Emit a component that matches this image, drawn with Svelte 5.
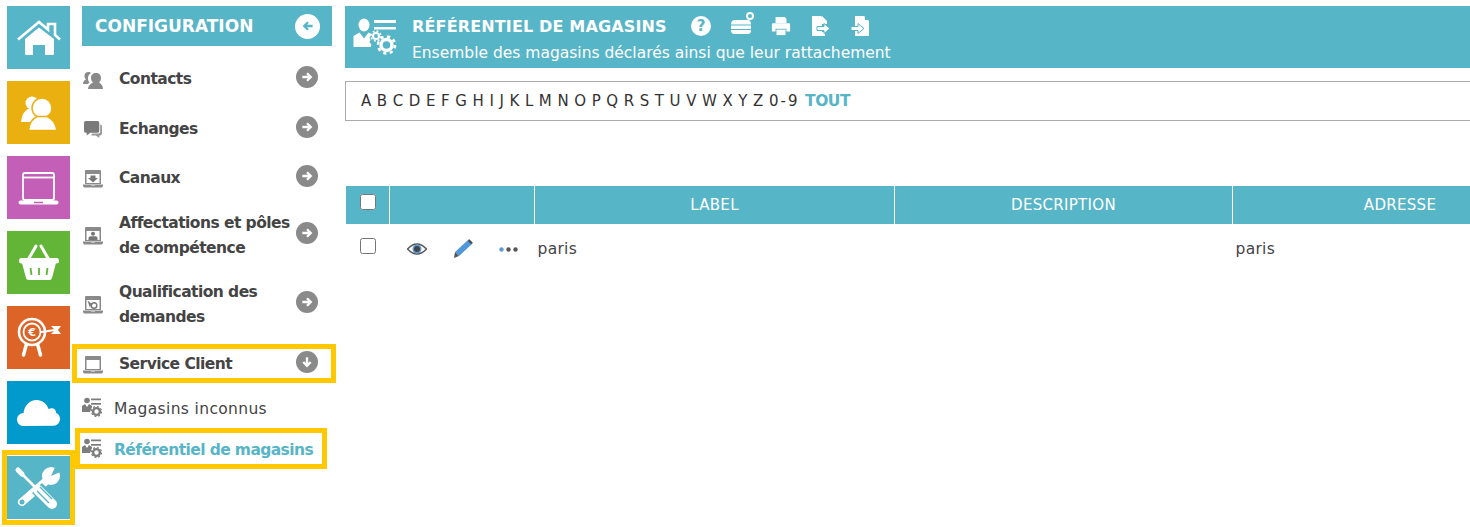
<script lang="ts">
  const letters = 'ABCDEFGHIJKLMNOPQRSTUVWXYZ'.split('');

  const menu = [
    { label: ['Contacts'], icon: 'contacts', h: 50 },
    { label: ['Echanges'], icon: 'chat', h: 50 },
    { label: ['Canaux'], icon: 'canaux', h: 48 },
    { label: ['Affectations et pôles', 'de compétence'], icon: 'affect', h: 66 },
    { label: ['Qualification des', 'demandes'], icon: 'qualif', h: 72 },
  ];
</script>

{#snippet laptop(inner)}
  <svg class="item-icon" viewBox="0 0 20 18" fill="#8a8a8a">
    <path d="M2 1q0-1 1-1h14q1 0 1 1v13H2zM3.500 4v9h13V4z" fill-rule="evenodd" />
    <path d="M0 14.500h20v1.500l-1 1.500H1l-1-1.500z" />
    <path d="M8 15h4v.8H8z" fill="#ccc" />
    {#if inner === 'canaux'}
      <path d="M7.500 5.500h5V8h2.500l-5 4.500L5 8h2.500z" fill="#777" />
    {:else if inner === 'affect'}
      <circle cx="10" cy="6.800" r="2" fill="#777" />
      <path d="M5.500 13v-2q0-1.800 2-1.800h5q2 0 2 1.800v2z" fill="#777" />
    {:else if inner === 'qualif'}
      <circle cx="11" cy="9.500" r="2.800" fill="none" stroke="#777" stroke-width="1.400" />
      <path d="M4.500 4.500 10 9l-2.500.5L7 12z" fill="#777" />
    {/if}
  </svg>
{/snippet}

{#snippet storeIcon()}
  <svg class="store-icon" viewBox="0 0 20 20" fill="#7d7d7d">
    <circle cx="5" cy="3.500" r="2.800" />
    <path d="M0 15V9l3-2 2 3 2-3 3 2v1l-2 5z" />
    <path d="M9 1.500h10v1.800H9zM9 6h10v1.800H9z" />
    <circle cx="14.500" cy="14.500" r="3.400" fill="none" stroke="#7d7d7d" stroke-width="2.400" />
    <circle cx="14.500" cy="14.500" r="5" fill="none" stroke="#7d7d7d" stroke-width="1.200" stroke-dasharray="2 1.900" />
  </svg>
{/snippet}

{#snippet arrow(dir)}
  <span class="round">
    <svg viewBox="0 0 12 12" class={dir}>
      <path d="M2 6h7M6 2.800 9.200 6 6 9.200" fill="none" stroke="#fff" stroke-width="2" />
    </svg>
  </span>
{/snippet}

<div class="page">
  <nav class="tiles">
    <div class="tile teal">
      <svg viewBox="0 0 63 63" fill="#fff">
        <path d="M11 33.500 32 16l9 7.500V18h7v11l5 4.500" fill="none" stroke="#fff" stroke-width="2.600" />
        <path d="M18 33 32 21.500 47 33v14.500q0 1.500-1.500 1.500H38V39H26v10h-6.500q-1.500 0-1.500-1.500z" />
      </svg>
    </div>
    <div class="tile yellow">
      <svg viewBox="0 0 63 63" fill="#fff">
        <circle cx="25" cy="22" r="6.500" />
        <path d="M14 41q1-10 7-13h8l4 5-8 8z" />
        <circle cx="35" cy="27" r="10" stroke="#e9b00f" stroke-width="1.500" />
        <path d="M21.500 49.500q1-11 9-14h9.500q8 3 10 14z" stroke="#e9b00f" stroke-width="1.500" />
      </svg>
    </div>
    <div class="tile purple">
      <svg viewBox="0 0 63 63" fill="none" stroke="#fff">
        <rect x="16" y="17" width="31" height="27" rx="2" stroke-width="1.800" />
        <path d="M16 21.500h31" stroke-width="1.800" />
        <path d="M13.500 46.500h36" stroke-width="4" stroke-linecap="round" />
        <path d="M27 46.500h9" stroke="#c45fb8" stroke-width="1.500" />
      </svg>
    </div>
    <div class="tile green">
      <svg viewBox="0 0 63 63" fill="#fff">
        <path d="M21 29 29 15M42 29 34 15" stroke="#fff" stroke-width="3" stroke-linecap="round" />
        <rect x="12" y="27" width="40" height="5.500" rx="2.500" />
        <path d="M15 32h34l-4 15q-.5 2-2.500 2h-21q-2 0-2.500-2z" />
        <path d="M23.500 37l1 7M32 37v7M40.500 37l-1 7" stroke="#62b536" stroke-width="1.800" fill="none" />
      </svg>
    </div>
    <div class="tile orange">
      <svg viewBox="0 0 63 63" fill="none" stroke="#fff">
        <path d="M20 36 16.500 49M30 36l3.500 13" stroke-width="3.500" stroke-linecap="round" />
        <circle cx="25" cy="26" r="13" fill="#dd6427" stroke-width="2.600" />
        <circle cx="25" cy="26" r="8.500" stroke-width="1.800" />
        <text x="25" y="30" text-anchor="middle" fill="#fff" stroke="none" font-size="11" font-weight="700" font-family="DejaVu Sans">€</text>
        <path d="M34 26 48 24" stroke-width="2" />
        <path d="M44 20l4 4-4 4h10l-3-4 3-4z" fill="#fff" stroke="none" />
      </svg>
    </div>
    <div class="tile blue">
      <svg viewBox="0 0 63 63" fill="#fff">
        <path d="M16 45c-3.500 0-6-3-6-6.500s3-6.500 6.500-6.500c.7-7 6-13 13-13 6 0 10.500 4 12 9 1-.5 2-.7 3-.7 3 0 4.500 2 4.500 4.500 2 1 4 3 4 6 0 4-3 7-6 7z" />
      </svg>
    </div>
    <div class="tile teal">
      <svg viewBox="0 0 63 63" fill="none">
        <path d="M15 46 38 26" stroke="#fff" stroke-width="8" stroke-linecap="round" />
        <circle cx="44" cy="20" r="9" fill="#fff" />
        <path d="M44 20 50 7 58 14z" fill="#57b5c8" />
        <circle cx="15" cy="46" r="2.500" fill="#57b5c8" />
        <path d="M30 32l16 16" stroke="#57b5c8" stroke-width="14" />
        <path d="M11 14l4 4" stroke="#fff" stroke-width="5" stroke-linecap="round" />
        <path d="M14 17l15 15" stroke="#fff" stroke-width="2.600" />
        <path d="M31 34l14 14" stroke="#fff" stroke-width="10" stroke-linecap="round" />
        <path d="M33 31l12 12M30 35l12 12" stroke="#57b5c8" stroke-width="1.400" />
      </svg>
    </div>
  </nav>

  <aside class="side">
    <div class="side-head">
      <span>CONFIGURATION</span>
      <span class="round white">
        <svg viewBox="0 0 12 12"><path d="M10 6H3M6 2.800 2.800 6 6 9.200" fill="none" stroke="#57b5c8" stroke-width="2" /></svg>
      </span>
    </div>

    {#each menu as m}
      <div class="item" style="height: {m.h}px">
        {#if m.icon === 'contacts'}
          <svg class="item-icon" viewBox="0 0 20 18" fill="#8a8a8a">
            <path d="M0 13c0-2 1-3.500 3-4.500-1-1-1.500-2-1.500-3.500 0-2.500 1.500-4 4-4 1 0 2 .5 2.500 1-2 1-3 3-3 5 0 2 .5 3.500 1.500 4.500C5 12.500 5 13 4.500 13z" />
            <path d="M5 18c0-3 2-5 5-6.500-1-1-2-2.500-2-4.500 0-3 2-5 5-5s5 2 5 5c0 2-1 3.500-2 4.500 2 1 4 3.500 4 6.500z" />
          </svg>
        {:else if m.icon === 'chat'}
          <svg class="item-icon" viewBox="0 0 20 20" fill="#7a7a7a">
            <path d="M2 0h13q2 0 2 2v9q0 2-2 2H7l-4 3v-3H2q-2 0-2-2V2q0-2 2-2z" />
            <path d="M18 4q2 0 2 2v8q0 2-2 2h-1v3l-4-3H8l1-2h7q2 0 2-2z" fill="#9a9a9a" />
          </svg>
        {:else}
          {@render laptop(m.icon)}
        {/if}
        <span class="item-label">
          {#each m.label as line}
            <span>{line}</span>
          {/each}
        </span>
        {@render arrow('right')}
      </div>
    {/each}

    <div class="item service">
      {@render laptop('')}
      <span class="item-label">Service Client</span>
      {@render arrow('down')}
    </div>
    <div class="sub">
      {@render storeIcon()}
      <span>Magasins inconnus</span>
    </div>
    <div class="sub current">
      {@render storeIcon()}
      <span>Référentiel de magasins</span>
    </div>

    <div class="mark mark-service"></div>
    <div class="mark mark-current"></div>
  </aside>

  <main class="main">
    <header class="head">
      <svg class="head-icon" viewBox="0 0 60 60" fill="#fff">
        <ellipse cx="19" cy="17" rx="5.500" ry="6.500" />
        <path d="M8.500 39V28l6-3.500 4.500 6 4.500-6 3 1.500-2 4 1 2-1 2 2 3-1 2z" />
        <path d="M29 12h22v3H29zM29 19h22v2.500H29z" />
        <circle cx="31" cy="28" r="3" fill="none" stroke="#fff" stroke-width="2" />
        <circle cx="31" cy="28" r="5" fill="none" stroke="#fff" stroke-width="1.500" stroke-dasharray="2 1.900" />
        <circle cx="41.500" cy="37" r="5.500" fill="none" stroke="#fff" stroke-width="3.400" />
        <circle cx="41.500" cy="37" r="8.500" fill="none" stroke="#fff" stroke-width="2.600" stroke-dasharray="3.300 3.400" />
      </svg>
      <div class="head-text">
        <div class="head-row">
          <h1>RÉFÉRENTIEL DE MAGASINS</h1>
          <div class="head-tools">
            <span class="help">?</span>
            <svg class="stack" viewBox="0 0 23 22" fill="#fff">
              <path d="M4 8h13q3 0 3 4.500H0Q0 8 4 8z" />
              <path d="M0 13.500h20v3.500H0z" />
              <path d="M0 18h20q0 4-3 4H3q-3 0-3-4z" />
              <circle cx="19" cy="4" r="3" fill="none" stroke="#fff" stroke-width="2" />
            </svg>
            <svg viewBox="0 0 22 20" fill="#fff">
              <path d="M5 0h10l2 2v5H5z" />
              <path d="M1 8q0-1 1-1h18q1 0 1 1v8h-4v-3H5v3H1z" />
              <path d="M6 14h10v6H6z" />
            </svg>
            <svg viewBox="0 0 20 20" fill="#fff">
              <path d="M1 0h9l1 1v4h5v3H11v8h3v4H1z" />
              <path d="M11 0l5 5h-5z" />
              <path d="M6 10.500h7V7.500l6 5-6 5v-3H6z" stroke="#57b5c8" stroke-width="1" />
            </svg>
            <svg viewBox="0 0 20 20" fill="#fff">
              <path d="M4 0h9l5 5v15H4z" />
              <path d="M14 0l4 4h-4z" fill="#57b5c8" />
              <path d="M0 10.500h7V7.500l6 5-6 5v-3H0z" stroke="#57b5c8" stroke-width="1" />
            </svg>
          </div>
        </div>
        <p>Ensemble des magasins déclarés ainsi que leur rattachement</p>
      </div>
    </header>

    <div class="alpha">
      {#each letters as l}
        <span>{l}</span>
      {/each}
      <span class="digits">0-9</span>
      <span class="all">TOUT</span>
    </div>

    <table>
      <thead>
        <tr>
          <th class="c-check"><input type="checkbox" /></th>
          <th class="c-actions"></th>
          <th class="c-label">LABEL</th>
          <th class="c-desc">DESCRIPTION</th>
          <th class="c-addr">ADRESSE</th>
        </tr>
      </thead>
      <tbody>
        <tr>
          <td class="td-check"><input type="checkbox" /></td>
          <td>
            <div class="actions">
              <svg viewBox="0 0 20 14" width="20" fill="none">
                <path d="M.5 7Q10-3 19.500 7 10 17 .5 7z" stroke="#555" stroke-width="1.400" />
                <circle cx="10" cy="7" r="4.500" fill="#5b9bd5" />
                <circle cx="10" cy="7" r="3" fill="#444" />
              </svg>
              <svg viewBox="0 0 20 20" width="20">
                <path d="M15 1l4 4L6 17l-4-4z" fill="#4f97d6" />
                <path d="M2 13l4 4-5 2z" fill="#555" />
                <path d="M16 0l4 4-2 1-3-3z" fill="#444" />
              </svg>
              <svg viewBox="0 0 19 5" width="19">
                <circle cx="2.500" cy="2.500" r="2.200" fill="#5b9bd5" />
                <circle cx="9.500" cy="2.500" r="2.200" fill="#555" />
                <circle cx="16.500" cy="2.500" r="2.200" fill="#555" />
              </svg>
            </div>
          </td>
          <td>paris</td>
          <td></td>
          <td>paris</td>
        </tr>
      </tbody>
    </table>
  </main>

  <div class="mark mark-tools"></div>
</div>

<style>
  :global(body) {
    margin: 0;
    background: #fff;
  }

  .page {
    position: relative;
    display: flex;
    width: 1470px;
    height: 527px;
    overflow: hidden;
    box-sizing: border-box;
    padding: 6px 0 0 7px;
    font-family: "DejaVu Sans", sans-serif;
    color: #444;
  }

  .tiles {
    display: flex;
    flex-direction: column;
    gap: 12px;
    width: 63px;
    flex: none;
  }

  .tile {
    width: 63px;
    height: 63px;
  }

  .tile svg {
    display: block;
    width: 63px;
    height: 63px;
  }

  .teal { background: #57b5c8; }
  .yellow { background: #e9b00f; }
  .purple { background: #c45fb8; }
  .green { background: #62b536; }
  .orange { background: #dd6427; }
  .blue { background: #0299cc; }

  .side {
    position: relative;
    width: 250px;
    flex: none;
    margin-left: 12px;
  }

  .side-head {
    height: 40px;
    margin-bottom: 6px;
    background: #57b5c8;
    color: #fff;
    display: flex;
    align-items: center;
    justify-content: space-between;
    padding: 0 12px 0 13px;
    font-size: 17px;
    font-weight: 700;
  }

  .round {
    width: 22px;
    height: 22px;
    flex: none;
    border-radius: 50%;
    background: #8a8a8a;
    display: flex;
    align-items: center;
    justify-content: center;
  }

  .round svg {
    width: 14px;
    height: 14px;
  }

  .round.white {
    width: 25px;
    height: 25px;
    background: #fff;
  }

  .down {
    transform: rotate(90deg);
  }

  .item {
    display: flex;
    align-items: center;
    padding-right: 14px;
    font-size: 15.500px;
    font-weight: 700;
    letter-spacing: -0.55px;
    box-sizing: border-box;
  }

  .item-icon {
    width: 20px;
    height: 18px;
    flex: none;
    margin: 5px 0 0 1px;
  }

  .item-label {
    flex: 1;
    display: flex;
    flex-direction: column;
    margin-left: 16px;
    padding-top: 5px;
    line-height: 25px;
    white-space: nowrap;
  }

  .service {
    height: 48px;
  }

  .sub {
    display: flex;
    align-items: center;
    height: 41px;
    font-size: 15.500px;
    letter-spacing: 0.35px;
  }

  .sub span {
    padding-top: 4px;
  }

  .store-icon {
    width: 20px;
    height: 20px;
    flex: none;
    margin-right: 12px;
  }

  .sub.current {
    color: #57b5c8;
    font-weight: 700;
    letter-spacing: -0.6px;
  }

  .mark {
    position: absolute;
    border: 5px solid #ffc800;
    box-sizing: border-box;
    pointer-events: none;
  }

  .mark-service {
    left: -10px;
    top: 338px;
    width: 264px;
    height: 39px;
  }

  .mark-current {
    left: -7px;
    top: 422px;
    width: 252px;
    height: 41px;
  }

  .mark-tools {
    left: 2px;
    top: 450px;
    width: 73px;
    height: 75px;
  }

  .main {
    flex: none;
    width: 1125px;
    margin-left: 13px;
  }

  .head {
    height: 62px;
    background: #57b5c8;
    color: #fff;
    display: flex;
    align-items: flex-start;
  }

  .head-icon {
    width: 60px;
    height: 60px;
    margin-top: 2px;
    flex: none;
  }

  .head-text {
    margin-left: 7px;
    padding-top: 10px;
  }

  .head-row {
    display: flex;
    align-items: center;
  }

  h1 {
    margin: 0;
    font-size: 16px;
    font-weight: 700;
    letter-spacing: 0.15px;
    width: 268px;
    white-space: nowrap;
  }

  .head-tools {
    display: flex;
    align-items: center;
    gap: 20px;
    margin-left: 11px;
  }

  .head-tools svg {
    width: 20px;
    height: 20px;
  }

  .head-tools .stack {
    width: 23px;
    height: 22px;
    margin: -6px -3px 0 0;
  }

  .help {
    width: 20px;
    height: 20px;
    border-radius: 50%;
    background: #fff;
    color: #57b5c8;
    font-size: 15px;
    font-weight: 700;
    display: flex;
    align-items: center;
    justify-content: center;
  }

  .head-text p {
    margin: 8px 0 0;
    font-size: 15.500px;
    white-space: nowrap;
  }

  .alpha {
    margin-top: 13px;
    height: 40px;
    box-sizing: border-box;
    border: 1px solid #aaa;
    border-right: none;
    display: flex;
    align-items: center;
    gap: 5.600px;
    padding-left: 15px;
    font-size: 15px;
    color: #333;
  }

  .digits {
    letter-spacing: 2px;
  }

  .all {
    color: #57b5c8;
    font-weight: 700;
    font-size: 15.500px;
    letter-spacing: -0.5px;
  }

  table {
    margin: 65px 0 0 1px;
    border-collapse: collapse;
    table-layout: fixed;
    width: 1217px;
  }

  th {
    height: 38px;
    padding: 0;
    background: #57b5c8;
    color: #fff;
    font-size: 15px;
    font-weight: 400;
    letter-spacing: 0.3px;
    text-align: center;
    border-left: 1px solid #fff;
  }

  th:first-child {
    border-left: none;
  }

  .c-check { width: 43px; }
  .c-actions { width: 144px; }
  .c-label { width: 359px; }
  .c-desc { width: 337px; }
  .c-addr { width: 334px; }

  td {
    height: 48px;
    padding: 1px 3px 0;
    font-size: 15.500px;
    letter-spacing: 0.3px;
    color: #444;
  }

  td:first-child,
  th:first-child {
    text-align: center;
  }

  .td-check {
    padding-top: 0;
  }

  input {
    width: 16px;
    height: 16px;
    margin: 0 0 6px;
  }

  .actions {
    display: flex;
    align-items: center;
    gap: 26px;
    margin-left: 14px;
  }
</style>
